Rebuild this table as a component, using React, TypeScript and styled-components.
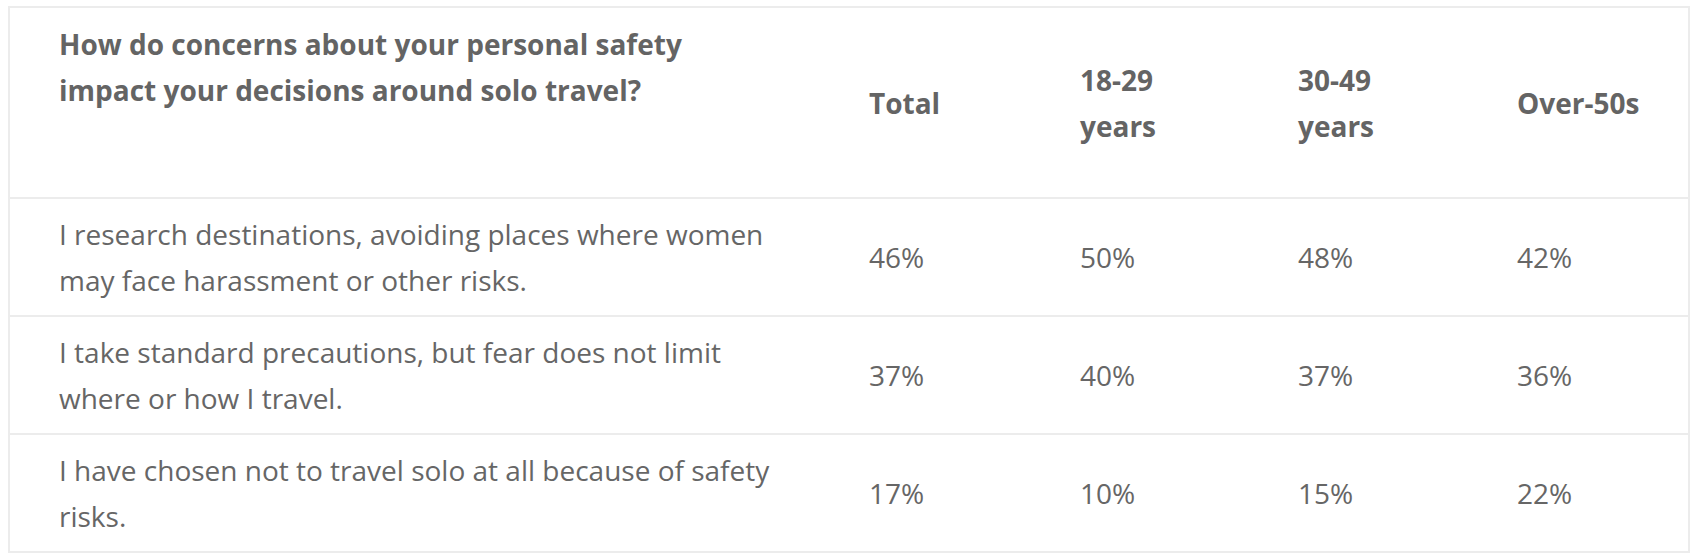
import React from "react";
import styled, { createGlobalStyle } from "styled-components";

const Global = createGlobalStyle`
  html, body { margin: 0; padding: 0; background: #fff; }
  body { font-family: "Open Sans", "Liberation Sans", sans-serif; }
`;

const Page = styled.div`
  padding: 6px 4px 0 8px;
`;

const Table = styled.table`
  width: 1680px;
  border-collapse: collapse;
  table-layout: fixed;
  border: 2px solid #ececec;
  color: #666;
  font-size: 28px;
  line-height: 46px;
`;

const HeadCell = styled.th<{ $top?: boolean }>`
  text-align: left;
  font-weight: 700;
  padding: 13px 40px 13px 49px;
  vertical-align: ${(p) => (p.$top ? "top" : "middle")};
  color: #646464;
`;

const HeadRow = styled.tr`
  height: 191px;
  border-bottom: 2px solid #ececec;
`;

const BodyRow = styled.tr`
  border-bottom: 2px solid #ececec;
`;

const Cell = styled.td`
  padding: 12px 40px 12px 49px;
  vertical-align: middle;
  font-weight: 400;
`;

const rows = [
  {
    label:
      "I research destinations, avoiding places where women may face harassment or other risks.",
    values: ["46%", "50%", "48%", "42%"],
  },
  {
    label:
      "I take standard precautions, but fear does not limit where or how I travel.",
    values: ["37%", "40%", "37%", "36%"],
  },
  {
    label:
      "I have chosen not to travel solo at all because of safety risks.",
    values: ["17%", "10%", "15%", "22%"],
  },
];

export default function App() {
  return (
    <>
      <Global />
      <Page>
        <Table>
          <colgroup>
            <col style={{ width: 811 }} />
            <col style={{ width: 211 }} />
            <col style={{ width: 218 }} />
            <col style={{ width: 219 }} />
            <col style={{ width: 221 }} />
          </colgroup>
          <thead>
            <HeadRow>
              <HeadCell $top>
                How do concerns about your personal safety impact your decisions
                around solo travel?
              </HeadCell>
              <HeadCell>Total</HeadCell>
              <HeadCell>18-29 years</HeadCell>
              <HeadCell>30-49 years</HeadCell>
              <HeadCell>Over-50s</HeadCell>
            </HeadRow>
          </thead>
          <tbody>
            {rows.map((r) => (
              <BodyRow key={r.label}>
                <Cell>{r.label}</Cell>
                {r.values.map((v, i) => (
                  <Cell key={i}>{v}</Cell>
                ))}
              </BodyRow>
            ))}
          </tbody>
        </Table>
      </Page>
    </>
  );
}
